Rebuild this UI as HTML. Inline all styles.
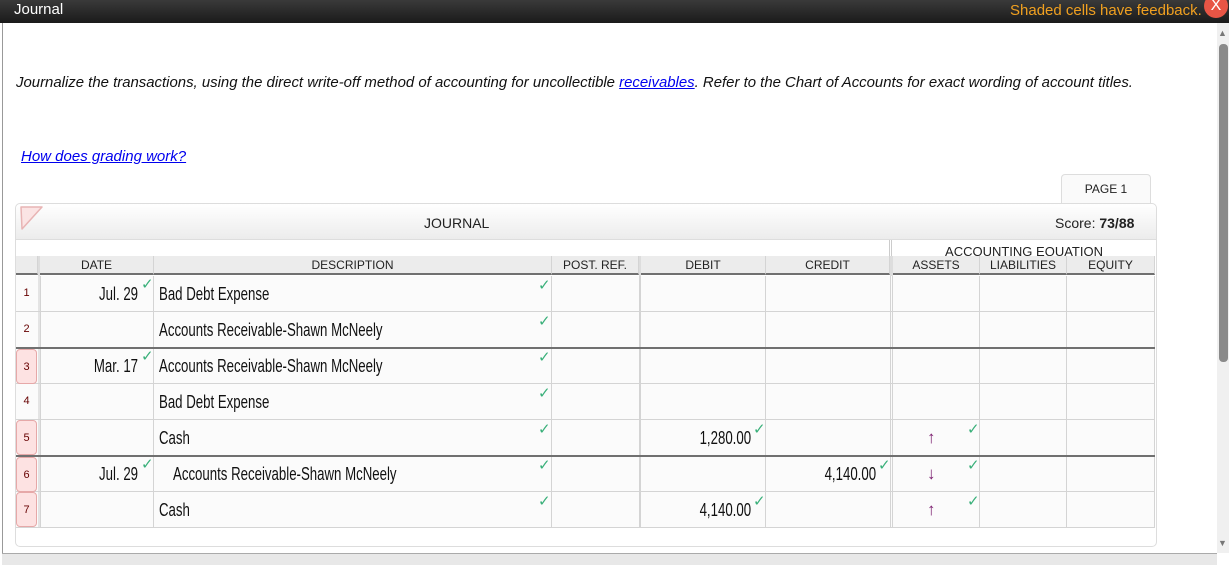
<!DOCTYPE html>
<html><head><meta charset="utf-8"><style>
*{margin:0;padding:0;box-sizing:border-box}
body{width:1229px;height:565px;overflow:hidden;background:#fff;font-family:"Liberation Sans",sans-serif;position:relative}
.a{position:absolute}
.top{left:0;top:0;width:1229px;height:23px;background:linear-gradient(#3a3a3a,#1a1a1a)}
.n{font-family:"Liberation Sans Narrow","Liberation Sans",sans-serif}
.ck{color:#3ab07a;font-size:15px}
.hd{position:absolute;top:256px;height:19px;background:#ececec;border-bottom:2px solid #707070;border-right:1px solid #d4d4d4;font-size:12px;color:#222;text-align:center;line-height:18px}
.rn{position:absolute;left:16px;width:21px;height:35px;font-size:11px;text-align:center;line-height:35px;color:#600}
.pink{background:#fde2e2;border:1px solid #e6a8a8;border-radius:4px}
.t{position:absolute;font-size:18px;color:#111;transform:scaleX(.735);transform-origin:left center;white-space:nowrap}
.tr{transform-origin:right center}
.arr{position:absolute;font-size:17px;color:#7a1d6e}
</style></head><body>
<div class="a top"></div>
<div class="a" style="left:14px;top:1px;color:#fff;font-size:15px">Journal</div>
<div class="a" style="left:1010px;top:2px;color:#f0a020;font-size:15px">Shaded cells have feedback.</div>
<div class="a" style="left:1204px;top:-6px;width:24px;height:24px;border-radius:50%;background:#e85545;color:#fff;font-size:16px;text-align:center;line-height:24px">X</div>
<div class="a" style="left:2px;top:23px;width:1px;height:530px;background:#999"></div>
<div class="a" style="left:1217px;top:23px;width:12px;height:530px;background:#f0f0f0"></div>
<div class="a" style="left:1219px;top:44px;width:9px;height:318px;background:#8a8a8a;border-radius:4px"></div>
<div class="a" style="left:1218px;top:28px;font-size:9px;color:#777">▲</div>
<div class="a" style="left:1218px;top:538px;font-size:9px;color:#777">▼</div>
<div class="a" style="left:2px;top:553px;width:1215px;height:12px;background:#e8e8e8;border-top:1px solid #aaa"></div>
<div class="a" style="left:16px;top:74px;font-size:15px;font-style:italic;color:#111;white-space:nowrap;transform:scaleX(.995);transform-origin:left">Journalize the transactions, using the direct write-off method of accounting for uncollectible <span style="color:#00e;text-decoration:underline">receivables</span>. Refer to the Chart of Accounts for exact wording of account titles.</div>
<div class="a" style="left:21px;top:148px;font-size:15px;font-style:italic;color:#00e;text-decoration:underline">How does grading work?</div>
<div class="a" style="left:1061px;top:174px;width:90px;height:30px;border:1px solid #ddd;border-bottom:none;border-radius:4px 4px 0 0;background:#fafafa;font-size:12px;text-align:center;line-height:28px;color:#222">PAGE 1</div>
<div class="a" style="left:15px;top:203px;width:1142px;height:344px;border:1px solid #ddd;border-radius:5px;background:#fff"></div>
<div class="a" style="left:16px;top:204px;width:1140px;height:36px;background:linear-gradient(#fff,#ececec);border-bottom:1px solid #ddd;border-radius:5px 5px 0 0"></div>
<svg class="a" style="left:18px;top:205px" width="28" height="28"><path d="M3 2 H24 L4 24 Z" fill="#fbe4e4" stroke="#e8b4b4" stroke-width="1.5" stroke-linejoin="round"/></svg>
<div class="a" style="left:424px;top:215px;font-size:14px;color:#222">JOURNAL</div>
<div class="a" style="left:1055px;top:215px;font-size:14px;color:#222">Score: <b>73/88</b></div>
<div class="a" style="left:889px;top:240px;width:3px;height:16px;border-left:1px solid #ccc;border-right:1px solid #ccc"></div>
<div class="a" style="left:893px;top:244px;width:262px;height:12px;overflow:hidden;font-size:13px;text-align:center;color:#222;line-height:16px">ACCOUNTING EQUATION</div>
<div class="hd" style="left:16px;width:22px"></div>
<div class="hd" style="left:40px;width:114px">DATE</div>
<div class="hd" style="left:154px;width:398px">DESCRIPTION</div>
<div class="hd" style="left:552px;width:87px">POST. REF.</div>
<div class="hd" style="left:641px;width:125px">DEBIT</div>
<div class="hd" style="left:766px;width:124px">CREDIT</div>
<div class="hd" style="left:893px;width:87px">ASSETS</div>
<div class="hd" style="left:980px;width:87px">LIABILITIES</div>
<div class="hd" style="left:1067px;width:88px">EQUITY</div>
<div class="a" style="left:38px;top:256px;width:2px;height:272px;background:#ddd"></div>
<div class="a" style="left:639px;top:256px;width:2px;height:272px;background:#ddd"></div>
<div class="a" style="left:890px;top:256px;width:3px;height:272px;background:#ddd"></div>
<div class="a" style="left:16px;top:276px;width:1139px;height:252px;background:#fbfbfb"></div>
<div class="a" style="left:40px;top:276px;width:1px;height:252px;background:#d4d4d4"></div>
<div class="a" style="left:153px;top:276px;width:1px;height:252px;background:#d4d4d4"></div>
<div class="a" style="left:551px;top:276px;width:1px;height:252px;background:#d4d4d4"></div>
<div class="a" style="left:639px;top:276px;width:2px;height:252px;background:#d4d4d4"></div>
<div class="a" style="left:765px;top:276px;width:1px;height:252px;background:#d4d4d4"></div>
<div class="a" style="left:890px;top:276px;width:3px;height:252px;border-left:1px solid #d4d4d4;border-right:1px solid #d4d4d4"></div>
<div class="a" style="left:979px;top:276px;width:1px;height:252px;background:#d4d4d4"></div>
<div class="a" style="left:1066px;top:276px;width:1px;height:252px;background:#d4d4d4"></div>
<div class="a" style="left:1154px;top:276px;width:1px;height:252px;background:#d4d4d4"></div>
<div class="a" style="left:38px;top:276px;width:2px;height:252px;background:#e4e4e4"></div>
<div class="a" style="left:16px;top:311px;width:1139px;height:1px;background:#d4d4d4"></div>
<div class="a" style="left:16px;top:347px;width:1139px;height:2px;background:#707070"></div>
<div class="a" style="left:16px;top:383px;width:1139px;height:1px;background:#d4d4d4"></div>
<div class="a" style="left:16px;top:419px;width:1139px;height:1px;background:#d4d4d4"></div>
<div class="a" style="left:16px;top:455px;width:1139px;height:2px;background:#707070"></div>
<div class="a" style="left:16px;top:491px;width:1139px;height:1px;background:#d4d4d4"></div>
<div class="a" style="left:16px;top:527px;width:1139px;height:1px;background:#d4d4d4"></div>
<div class="rn" style="top:276px">1</div>
<div class="rn" style="top:312px">2</div>
<div class="rn pink" style="top:349px">3</div>
<div class="rn" style="top:384px">4</div>
<div class="rn pink" style="top:420px">5</div>
<div class="rn pink" style="top:457px">6</div>
<div class="rn pink" style="top:492px">7</div>
<div class="t n tr" style="right:1091px;top:284px">Jul. 29</div><div class="a ck" style="left:141px;top:275px">✓</div>
<div class="t n" style="left:159px;top:284px">Bad Debt Expense</div>
<div class="t n" style="left:159px;top:320px">Accounts Receivable-Shawn McNeely</div>
<div class="t n tr" style="right:1091px;top:356px">Mar. 17</div><div class="a ck" style="left:141px;top:347px">✓</div>
<div class="t n" style="left:159px;top:356px">Accounts Receivable-Shawn McNeely</div>
<div class="t n" style="left:159px;top:392px">Bad Debt Expense</div>
<div class="t n" style="left:159px;top:428px">Cash</div>
<div class="t n tr" style="right:1091px;top:464px">Jul. 29</div><div class="a ck" style="left:141px;top:455px">✓</div>
<div class="t n" style="left:173px;top:464px">Accounts Receivable-Shawn McNeely</div>
<div class="t n" style="left:159px;top:500px">Cash</div>
<div class="a ck" style="left:538px;top:276px">✓</div>
<div class="a ck" style="left:538px;top:312px">✓</div>
<div class="a ck" style="left:538px;top:348px">✓</div>
<div class="a ck" style="left:538px;top:384px">✓</div>
<div class="a ck" style="left:538px;top:420px">✓</div>
<div class="a ck" style="left:538px;top:456px">✓</div>
<div class="a ck" style="left:538px;top:492px">✓</div>
<div class="t n tr" style="right:478px;top:428px">1,280.00</div><div class="a ck" style="left:753px;top:420px">✓</div>
<div class="t n tr" style="right:353px;top:464px">4,140.00</div><div class="a ck" style="left:878px;top:456px">✓</div>
<div class="t n tr" style="right:478px;top:500px">4,140.00</div><div class="a ck" style="left:753px;top:492px">✓</div>
<div class="arr" style="left:927px;top:428px">↑</div><div class="a ck" style="left:967px;top:420px">✓</div>
<div class="arr" style="left:927px;top:464px">↓</div><div class="a ck" style="left:967px;top:456px">✓</div>
<div class="arr" style="left:927px;top:500px">↑</div><div class="a ck" style="left:967px;top:492px">✓</div>
</body></html>
